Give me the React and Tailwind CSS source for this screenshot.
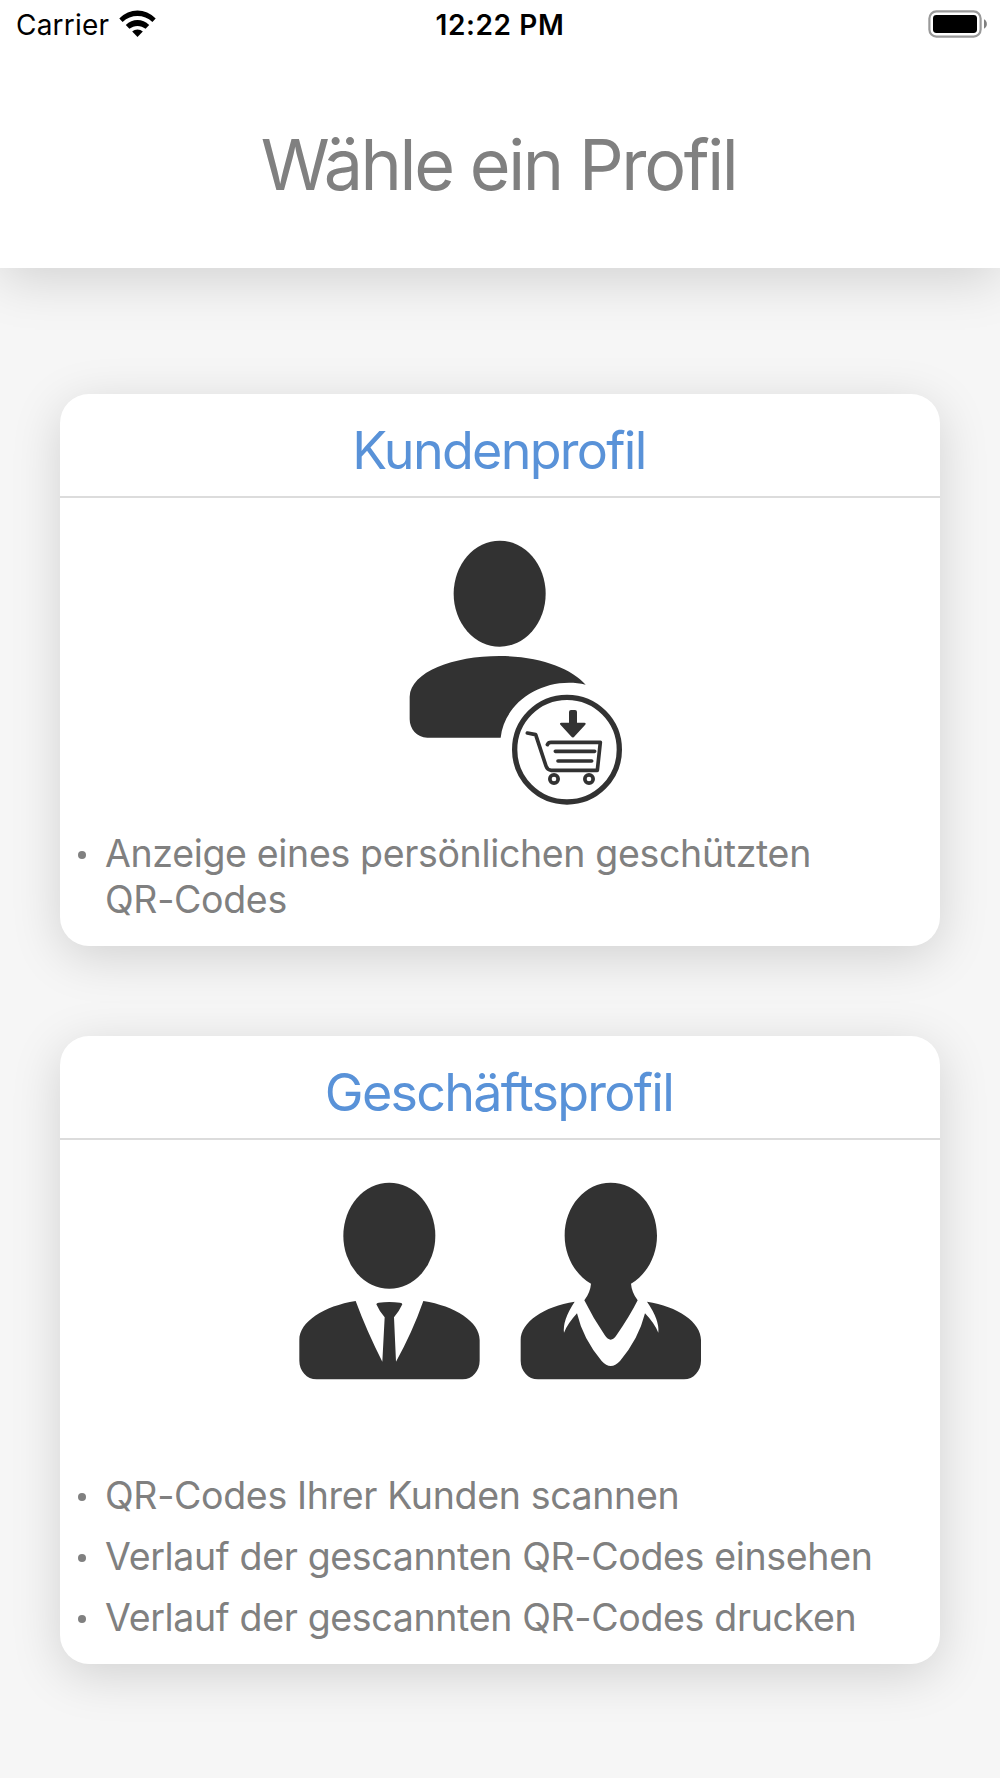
function WifiIcon() {
  return (
    <svg viewBox="0 0 37 28" className="w-[37px] h-7" fill="#000">
      <path d="M0.3 8.6 C10.5 -2.3 26.5 -2.3 36.7 8.6 L33.4 12 C25 4.1 12 4.1 3.6 12 Z" />
      <path d="M6.8 15.1 C13.5 8.4 23.5 8.4 30.2 15.1 L26.6 18.8 C22 14.9 15 14.9 10.4 18.8 Z" />
      <path d="M13.2 21.6 C16 18.9 21 18.9 23.8 21.6 L18.5 27 Z" />
    </svg>
  )
}

function BatteryIcon() {
  return (
    <svg viewBox="0 0 60 28" className="w-[60px] h-7">
      <rect x="1.4" y="1.4" width="51.2" height="25.2" rx="7" fill="none" stroke="#999" strokeWidth="2.2" />
      <rect x="5" y="5" width="44" height="18" rx="3.4" fill="#000" />
      <path d="M56 9.3 C59.8 11 59.8 17 56 18.7 Z" fill="#808080" />
    </svg>
  )
}

function CustomerIcon() {
  return (
    <svg viewBox="-45 0 750 870" className="w-[250px] h-[290px]" fill="#323232">
      <ellipse cx="329" cy="221" rx="138" ry="159" />
      <path d="M59 530 C62 455 190 408 329 408 C450 408 545 446 587 494 C463 467 343 545 332 653 L112 653 C80 653 59 626 59 598 Z" />
      <circle cx="531" cy="689" r="157" fill="#fff" stroke="#323232" strokeWidth="16" />
      <path d="M543 570 H555 Q561 570 561 576 V608 H583 Q590 609 585 615 L554 649 Q549 656 543 649 L512 615 Q507 609 514 608 H537 V576 Q537 570 543 570 Z" />
      <g fill="none" stroke="#323232" strokeWidth="11" strokeLinecap="round" strokeLinejoin="round">
        <path d="M412 639 L437 644 L468 738 Q472 750 484 751 H622 L631 667 H483 Q475 667 472 674" />
        <path d="M496 694 H614 M504 723 H605" />
        <circle cx="492" cy="777" r="12.5" />
        <circle cx="597" cy="777" r="12.5" />
      </g>
    </svg>
  )
}

function BusinessIcon() {
  return (
    <svg viewBox="0 0 1320 690" className="w-[440px] h-[230px]" fill="#323232">
      <ellipse cx="328" cy="197" rx="138" ry="159" />
      <path d="M227 393 Q261 485 307 575 L314 442 Q298 424 289 403 Q290 399 296 398 Q328 394 360 398 Q367 399 367 403 Q357 425 342 442 L348 575 Q397 487 430 393 C525 408 599 455 599 510 V572 C599 602 577 628 548 628 H110 C80 628 58 602 58 572 V510 C58 455 132 408 227 393 Z" />
      <path d="M992 38 C1069 38 1131 108 1131 197 C1131 257 1100 314 1053 341 Q1055 367 1073 391 Q1049 439 1010 495 Q992 523 974 495 Q940 446 913 391 Q931 367 933 341 C885 314 854 257 854 197 C854 108 916 38 992 38 Z" />
      <path d="M884 395 Q847 451 852 488 Q862 462 891 430 Q909 507 965 573 Q992 603 1020 573 Q1076 507 1095 430 Q1122 458 1135 488 Q1139 450 1101 395 C1193 409 1263 456 1263 510 V572 C1263 602 1241 628 1212 628 H774 C744 628 722 602 722 572 V510 C722 456 792 409 884 395 Z" />
    </svg>
  )
}

function ProfileCard({ title, icon, items, className }) {
  return (
    <section className={`bg-white rounded-[29px] shadow-[0_11px_50px_rgba(0,0,0,0.15)] ${className}`}>
      <h2 className="h-[104px] pt-[25px] pr-0.5 border-b-2 border-[#dcdcdc] text-center text-[52px] leading-[63px] tracking-[-1.7px] text-[#5992d8]">
        {title}
      </h2>
      {icon}
      <ul className="flex flex-col gap-[15px] pl-[18px] pr-10 text-[37.5px] leading-[46px] tracking-[-0.34px] text-[#808080]">
        {items.map((item) => (
          <li key={item} className="flex">
            <span className="mt-5 mr-[19px] size-2 shrink-0 rounded-full bg-[#808080]" />
            <span className="whitespace-pre-line">{item}</span>
          </li>
        ))}
      </ul>
    </section>
  )
}

export default function App() {
  return (
    <div className="w-[1000px] h-[1778px] overflow-hidden bg-[#f6f6f6] font-['Inter',sans-serif]">
      <header className="h-[268px] bg-white shadow-[0_11px_50px_rgba(0,0,0,0.15)]">
        <div className="grid grid-cols-3 h-[50px] px-3 text-black">
          <div className="flex items-start gap-[10px] pl-1 pt-[10px]">
            <span className="text-[28px] leading-[30px] tracking-[0.2px]">Carrier</span>
            <WifiIcon />
          </div>
          <span className="pt-[10px] text-center text-[28px] leading-[30px] font-semibold tracking-[0.6px]">12:22 PM</span>
          <div className="flex justify-end pt-[10px]"><BatteryIcon /></div>
        </div>
        <h1 className="pt-[72px] pr-[3px] text-center text-[70px] leading-[85px] tracking-[-2.4px] text-[#808080]">Wähle ein Profil</h1>
      </header>
      <main className="flex flex-col gap-[90px] px-[60px] pt-[126px]">
        <ProfileCard
          title="Kundenprofil"
          icon={<div className="flex justify-center h-[333px] pt-[22px]"><CustomerIcon /></div>}
          items={['Anzeige eines persönlichen geschützten\nQR-Codes']}
          className="h-[552px]"
        />
        <ProfileCard
          title="Geschäftsprofil"
          icon={<div className="flex justify-center h-[333px] pt-[30px]"><BusinessIcon /></div>}
          items={[
            'QR-Codes Ihrer Kunden scannen',
            'Verlauf der gescannten QR-Codes einsehen',
            'Verlauf der gescannten QR-Codes drucken',
          ]}
          className="h-[628px]"
        />
      </main>
    </div>
  )
}
